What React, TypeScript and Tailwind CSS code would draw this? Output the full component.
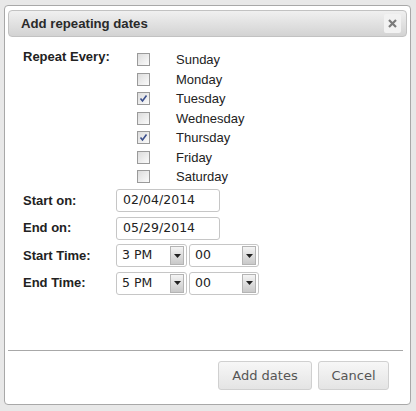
import React from "react";

const days = [
  { name: "Sunday", checked: false },
  { name: "Monday", checked: false },
  { name: "Tuesday", checked: true },
  { name: "Wednesday", checked: false },
  { name: "Thursday", checked: true },
  { name: "Friday", checked: false },
  { name: "Saturday", checked: false },
];

function Checkbox({ checked }: { checked: boolean }) {
  return (
    <div className="w-[13px] h-[13px] border border-[#9a9a9a] bg-gradient-to-br from-[#dcdcdc] to-[#fbfbfb] flex items-center justify-center shrink-0">
      {checked && (
        <svg width="9" height="9" viewBox="0 0 9 9">
          <path d="M1.5 4.5 L3.5 7 L7.5 1.5" stroke="#3b4f8c" strokeWidth="1.6" fill="none" />
        </svg>
      )}
    </div>
  );
}

function Select({ value, width }: { value: string; width: string }) {
  return (
    <div
      className={`${width} h-[23px] border border-[#c6c6c6] rounded-[3px] bg-white flex items-center justify-between pl-[5px] pr-[2px] font-['DejaVu_Sans'] text-[12.5px] text-[#222]`}
    >
      <span>{value}</span>
      <div className="w-[14px] h-[19px] border border-[#b4b4b4] bg-gradient-to-b from-[#f4f4f4] to-[#c9c9c9] flex items-center justify-center">
        <svg width="7" height="4" viewBox="0 0 7 4">
          <path d="M0 0 L7 0 L3.5 4 Z" fill="#222" />
        </svg>
      </div>
    </div>
  );
}

function TextInput({ value }: { value: string }) {
  return (
    <div className="w-[104px] h-[23px] border border-[#c6c6c6] rounded-[3px] bg-white flex items-center pl-[6px] font-['DejaVu_Sans'] text-[12.5px] text-[#222]">
      {value}
    </div>
  );
}

function Label({ children }: { children: React.ReactNode }) {
  return <div className="w-[93px] shrink-0 font-bold text-[13px] text-[#222]">{children}</div>;
}

export default function App() {
  return (
    <div className="w-[416px] h-[411px] bg-[#e8e8e8] pt-[5px] pl-[4px] font-['Liberation_Sans',sans-serif]">
      <div className="w-[407px] h-[400px] bg-white border border-[#a8a8a8] rounded-[4px] pt-[4px] px-[3px] pb-[3px] flex flex-col">
        <div className="h-[27px] rounded-[4px] border border-[#c2c2c2] bg-gradient-to-b from-[#f0f0f0] to-[#d3d3d3] flex items-center justify-between pl-[12px] pr-[5px]">
          <span className="font-bold text-[13.2px] text-[#2a2a2a]">Add repeating dates</span>
          <div className="w-[17px] h-[19px] bg-[#f2f2f2] rounded-[2px] flex items-center justify-center">
            <svg width="9" height="9" viewBox="0 0 9 9">
              <path d="M1 1 L8 8 M8 1 L1 8" stroke="#7a7a7a" strokeWidth="2.2" />
            </svg>
          </div>
        </div>

        <div className="flex-1 pl-[15px] text-[13px] text-[#222]">
          <div className="flex pt-[10px]">
            <Label>Repeat Every:</Label>
            <div className="flex flex-col pt-[3px] pl-[21px]">
              {days.map((d) => (
                <div key={d.name} className="h-[19.5px] flex items-center">
                  <Checkbox checked={d.checked} />
                  <span className="ml-[26px] text-[13px] text-[#222] leading-none">{d.name}</span>
                </div>
              ))}
            </div>
          </div>

          <div className="flex flex-col gap-[4.5px] mt-[2.5px]">
            <div className="flex items-center">
              <Label>Start on:</Label>
              <TextInput value="02/04/2014" />
            </div>
            <div className="flex items-center">
              <Label>End on:</Label>
              <TextInput value="05/29/2014" />
            </div>
            <div className="flex items-center">
              <Label>Start Time:</Label>
              <Select value="3 PM" width="w-[71px]" />
              <div className="w-[2px]" />
              <Select value="00" width="w-[70px]" />
            </div>
            <div className="flex items-center">
              <Label>End Time:</Label>
              <Select value="5 PM" width="w-[71px]" />
              <div className="w-[2px]" />
              <Select value="00" width="w-[70px]" />
            </div>
          </div>
        </div>

        <div className="mr-[4px] border-t border-[#a8a8a8] pt-[10px] pb-[11px] pr-[14px] flex justify-end gap-[6px] font-['DejaVu_Sans'] text-[13px] text-[#555]">
          <div className="w-[94px] h-[29px] border border-[#d0d0d0] rounded-[3px] bg-gradient-to-b from-[#f7f7f7] to-[#e4e4e4] flex items-center justify-center">
            Add dates
          </div>
          <div className="w-[71px] h-[29px] border border-[#d0d0d0] rounded-[3px] bg-gradient-to-b from-[#f7f7f7] to-[#e4e4e4] flex items-center justify-center">
            Cancel
          </div>
        </div>
      </div>
    </div>
  );
}
